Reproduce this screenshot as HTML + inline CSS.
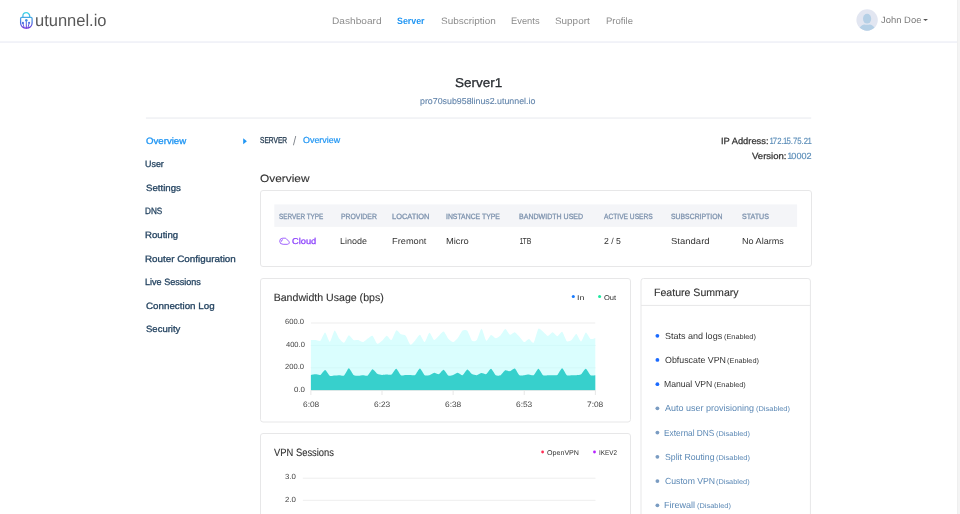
<!DOCTYPE html>
<html lang="en">
<head>
<meta charset="utf-8">
<title>UTunnel - Server Overview</title>
<style>
html,body{margin:0;padding:0;background:#fff;}
body{width:960px;height:514px;overflow:hidden;position:relative;font-family:"Liberation Sans",Arial,sans-serif;}
#page{position:absolute;left:0;top:0;width:960px;height:514px;overflow:hidden;will-change:transform;}
#shapes{position:absolute;left:0;top:0;}
.t{position:absolute;white-space:nowrap;transform-origin:0 0;display:block;text-rendering:geometricPrecision;}
.o{margin-left:-0.07em;letter-spacing:-0.12em;}
</style>
</head>
<body>
<div id="page">
<svg id="shapes" width="960" height="514" viewBox="0 0 960 514">
  <defs>
    <linearGradient id="lg" gradientUnits="userSpaceOnUse" x1="0" y1="12" x2="0" y2="29">
      <stop offset="0" stop-color="#3edbe8"/>
      <stop offset="0.35" stop-color="#48a6e4"/>
      <stop offset="0.65" stop-color="#4a6fe0"/>
      <stop offset="1" stop-color="#6d25d8"/>
    </linearGradient>
    <clipPath id="av"><circle cx="867.1" cy="20" r="10.7"/></clipPath>
  </defs>
  <!-- header -->
  <rect x="0" y="41.2" width="957" height="1.8" fill="#f1f2f8"/>
  <!-- scrollbar track -->
  <rect x="957.2" y="0" width="2.8" height="514" fill="#f4f4f4"/>
  <rect x="957" y="0" width="0.7" height="514" fill="#ececec"/>
  <!-- logo padlock -->
  <g fill="none" stroke="url(#lg)" stroke-width="1.25" stroke-linecap="round" stroke-linejoin="round">
    <path d="M22.9 17.2v-1.1a3.4 3.4 0 0 1 6.8 0v1.1"/>
    <path d="M21.7 17.4h9.3a1.1 1.1 0 0 1 1.1 1.1v4.6c0 3-2.4 5.1-5.75 5.1s-5.75-2.1-5.75-5.1v-4.6a1.1 1.1 0 0 1 1.1-1.1z"/>
    <path d="M26.3 20.6v7.4M23 23.2c0 1.6 .9 2.2 .9 4.2M29.1 23c0 1.7-.9 2.3-.9 4.4" stroke-width="1"/>
  </g>
  <g fill="url(#lg)">
    <circle cx="26.3" cy="20.3" r="1.25"/>
    <circle cx="22.9" cy="22.9" r="1.05"/>
    <circle cx="29.1" cy="22.7" r="1.05"/>
  </g>
  <!-- avatar -->
  <circle cx="867.1" cy="20" r="10.7" fill="#e2e6f1"/>
  <g clip-path="url(#av)" fill="#b5d0e6">
    <ellipse cx="867.1" cy="18.7" rx="4.1" ry="4.9"/>
    <path d="M858.7 31.5c0-4.2 2.4-6.3 5.6-7.1c1.8 .6 3.8 .6 5.6 0c3.2 .8 5.6 2.9 5.6 7.1z"/>
  </g>
  <!-- caret -->
  <path d="M923.1 19.1h4.9l-2.45 2z" fill="#555"/>
  <!-- hr -->
  <rect x="145.9" y="117.3" width="665.3" height="1.5" fill="#eff1f4"/>
  <!-- sidebar arrow -->
  <path d="M243.2 138.3v6l3.7-3z" fill="#2196f3"/>
  <!-- overview card -->
  <rect x="260.5" y="190.5" width="551" height="76" rx="2.5" fill="#fff" stroke="#e7e7e8"/>
  <rect x="274.3" y="204.4" width="522.8" height="22.5" fill="#f4f5f8"/>
  <!-- cloud icon -->
  <path d="M282.75 244.3a3.05 3.05 0 0 1 0-6.1h2.2q.8 0 1.3 .5l2.6 2.7a1.75 1.75 0 0 1-1.25 2.9z M281.2 241.4a1.8 1.8 0 0 1 1.4-1.7" fill="none" stroke="#8a3ffc" stroke-width="0.9" stroke-linecap="round" stroke-linejoin="round" opacity="0.9"/>
  <!-- bandwidth card -->
  <rect x="260.5" y="278.5" width="370" height="143.5" rx="2.5" fill="#fff" stroke="#e7e7e8"/>
  <g fill="#eeeeee">
    <rect x="310.9" y="322.5" width="284.4" height="1"/>
    <rect x="310.9" y="344.9" width="284.4" height="1"/>
    <rect x="310.9" y="367.3" width="284.4" height="1"/>
  </g>
<path d="M310.90,340.00C311.37,340.00 314.69,339.92 315.64,340.00C316.59,340.08 319.43,341.55 320.38,340.80C321.33,340.05 324.17,332.40 325.12,332.50C326.07,332.60 328.91,342.01 329.86,341.80C330.81,341.59 333.65,330.70 334.60,330.40C335.55,330.09 338.39,337.52 339.34,338.75C340.29,339.98 343.13,343.05 344.08,342.70C345.03,342.35 347.87,335.52 348.82,335.25C349.77,334.98 352.61,339.52 353.56,340.00C354.51,340.48 357.35,339.79 358.30,340.00C359.25,340.21 362.09,342.25 363.04,342.10C363.99,341.95 366.83,339.14 367.78,338.50C368.73,337.86 371.57,335.18 372.52,335.70C373.47,336.22 376.31,343.24 377.26,343.75C378.21,344.26 381.05,341.61 382.00,340.80C382.95,340.00 385.79,335.78 386.74,335.70C387.69,335.62 390.53,340.53 391.48,340.00C392.43,339.47 395.27,330.97 396.22,330.40C397.17,329.83 400.01,333.77 400.96,334.30C401.91,334.83 404.75,334.65 405.70,335.70C406.65,336.75 409.49,344.28 410.44,344.75C411.39,345.22 414.23,341.39 415.18,340.40C416.13,339.40 418.97,334.63 419.92,334.80C420.87,334.97 423.71,342.31 424.66,342.10C425.61,341.89 428.45,332.91 429.40,332.70C430.35,332.49 433.19,339.69 434.14,340.00C435.09,340.31 437.93,336.65 438.88,335.80C439.83,334.95 442.67,331.20 443.62,331.50C444.57,331.80 447.41,337.69 448.36,338.75C449.31,339.81 452.15,342.19 453.10,342.10C454.05,342.02 456.89,339.07 457.84,337.90C458.79,336.73 461.63,331.12 462.58,330.40C463.53,329.68 466.37,329.66 467.32,330.70C468.27,331.74 471.11,339.87 472.06,340.80C473.01,341.73 475.85,341.20 476.80,340.00C477.75,338.80 480.59,328.67 481.54,328.75C482.49,328.83 485.33,340.18 486.28,340.80C487.23,341.43 490.07,335.26 491.02,335.00C491.97,334.74 494.81,338.16 495.76,338.20C496.71,338.24 499.55,336.32 500.50,335.40C501.45,334.48 504.29,329.06 505.24,329.00C506.19,328.94 509.03,334.47 509.98,334.80C510.93,335.13 513.77,332.11 514.72,332.30C515.67,332.49 518.51,335.72 519.46,336.70C520.41,337.68 523.25,341.87 524.20,342.10C525.15,342.33 527.99,338.94 528.94,339.00C529.89,339.06 532.73,343.72 533.68,342.70C534.63,341.68 537.47,329.84 538.42,328.75C539.37,327.66 542.21,331.07 543.16,331.80C544.11,332.53 546.95,335.95 547.90,336.00C548.85,336.05 551.69,332.28 552.64,332.30C553.59,332.32 556.43,336.31 557.38,336.25C558.33,336.19 561.17,331.20 562.12,331.70C563.07,332.20 565.91,340.42 566.86,341.25C567.81,342.08 570.65,340.73 571.60,340.00C572.55,339.27 575.39,333.85 576.34,334.00C577.29,334.15 580.13,341.65 581.08,341.50C582.03,341.35 584.87,332.75 585.82,332.50C586.77,332.25 589.61,338.46 590.56,339.00C591.51,339.54 594.83,338.01 595.30,337.90L595.30,390.2L310.90,390.2Z" fill="#dafefe"/>
<rect x="310.9" y="344.9" width="284.4" height="1" fill="#d0f6f6" opacity="0.7"/>
<rect x="310.9" y="367.3" width="284.4" height="1" fill="#d0f6f6" opacity="0.7"/>
<path d="M310.90,374.90C311.37,374.84 314.69,374.30 315.64,374.30C316.59,374.30 319.43,375.34 320.38,374.90C321.33,374.46 324.17,369.81 325.12,369.90C326.07,369.98 328.91,375.19 329.86,375.75C330.81,376.31 333.65,375.56 334.60,375.50C335.55,375.44 338.39,375.20 339.34,375.20C340.29,375.20 343.13,376.19 344.08,375.50C345.03,374.81 347.87,368.31 348.82,368.25C349.77,368.19 352.61,374.15 353.56,374.90C354.51,375.65 357.35,375.72 358.30,375.75C359.25,375.78 362.09,375.22 363.04,375.20C363.99,375.18 366.83,376.09 367.78,375.50C368.73,374.91 371.57,369.47 372.52,369.30C373.47,369.13 376.31,373.24 377.26,373.80C378.21,374.36 381.05,374.83 382.00,374.90C382.95,374.97 385.79,374.54 386.74,374.50C387.69,374.46 390.53,375.08 391.48,374.50C392.43,373.92 395.27,368.63 396.22,368.70C397.17,368.77 400.01,374.58 400.96,375.20C401.91,375.82 404.75,374.93 405.70,374.90C406.65,374.87 409.49,374.90 410.44,374.90C411.39,374.90 414.23,375.54 415.18,374.90C416.13,374.26 418.97,368.47 419.92,368.50C420.87,368.53 423.71,374.53 424.66,375.20C425.61,375.87 428.45,375.44 429.40,375.20C430.35,374.96 433.19,372.91 434.14,372.80C435.09,372.69 437.93,374.41 438.88,374.10C439.83,373.79 442.67,369.56 443.62,369.70C444.57,369.84 447.41,374.98 448.36,375.50C449.31,376.02 452.15,375.18 453.10,374.90C454.05,374.62 456.89,372.67 457.84,372.70C458.79,372.73 461.63,375.52 462.58,375.20C463.53,374.88 466.37,369.61 467.32,369.50C468.27,369.39 471.11,373.53 472.06,374.10C473.01,374.67 475.85,375.31 476.80,375.20C477.75,375.09 480.59,373.11 481.54,373.00C482.49,372.89 485.33,374.52 486.28,374.10C487.23,373.68 490.07,368.69 491.02,368.80C491.97,368.91 494.81,374.56 495.76,375.20C496.71,375.84 499.55,375.70 500.50,375.20C501.45,374.70 504.29,370.59 505.24,370.20C506.19,369.81 509.03,371.47 509.98,371.30C510.93,371.13 513.77,368.11 514.72,368.50C515.67,368.89 518.51,374.53 519.46,375.20C520.41,375.87 523.25,375.27 524.20,375.20C525.15,375.13 527.99,374.50 528.94,374.50C529.89,374.50 532.73,375.78 533.68,375.20C534.63,374.62 537.47,368.69 538.42,368.70C539.37,368.71 542.21,374.65 543.16,375.30C544.11,375.95 546.95,375.21 547.90,375.20C548.85,375.19 551.69,375.23 552.64,375.20C553.59,375.17 556.43,375.59 557.38,374.90C558.33,374.20 561.17,368.21 562.12,368.25C563.07,368.29 565.91,374.61 566.86,375.30C567.81,376.00 570.65,375.21 571.60,375.20C572.55,375.19 575.39,375.29 576.34,375.20C577.29,375.11 580.13,374.95 581.08,374.30C582.03,373.65 584.87,368.61 585.82,368.70C586.77,368.79 589.61,374.55 590.56,375.20C591.51,375.85 594.83,375.20 595.30,375.20L595.30,390.2L310.90,390.2Z" fill="#37d0cc"/>
  <g fill="#e2e2e2">
    <rect x="310.9" y="390.2" width="284.4" height="0.7"/>
    <rect x="310.5" y="390.2" width="0.8" height="4.8"/>
    <rect x="381.6" y="390.2" width="0.8" height="4.8"/>
    <rect x="452.7" y="390.2" width="0.8" height="4.8"/>
    <rect x="523.8" y="390.2" width="0.8" height="4.8"/>
    <rect x="594.9" y="390.2" width="0.8" height="4.8"/>
  </g>
  <circle cx="573.3" cy="296.5" r="1.55" fill="#1a7cff"/>
  <circle cx="599.6" cy="296.5" r="1.55" fill="#1de9a0"/>
  <!-- vpn card -->
  <rect x="260.5" y="433.5" width="370" height="120" rx="2.5" fill="#fff" stroke="#e7e7e8"/>
  <g fill="#eeeeee">
    <rect x="302.8" y="477.7" width="292.7" height="1"/>
    <rect x="302.8" y="499.8" width="292.7" height="1"/>
  </g>
  <circle cx="542.6" cy="452" r="1.4" fill="#ff2d55"/>
  <circle cx="594.5" cy="452" r="1.4" fill="#b620ff"/>
  <!-- feature card -->
  <rect x="641" y="278.5" width="169.4" height="300" rx="2.5" fill="#fff" stroke="#e7e7e8"/>
  <rect x="641" y="304.9" width="169.4" height="1" fill="#e7e7e8"/>
  <g fill="#1a6aff">
    <circle cx="657.4" cy="335.8" r="1.9"/>
    <circle cx="657.4" cy="359.9" r="1.9"/>
    <circle cx="657.4" cy="384.2" r="1.9"/>
  </g>
  <g fill="#7a9cc2">
    <circle cx="657.4" cy="408.3" r="1.9"/>
    <circle cx="657.4" cy="432.6" r="1.9"/>
    <circle cx="657.4" cy="456.8" r="1.9"/>
    <circle cx="657.4" cy="481.1" r="1.9"/>
    <circle cx="657.4" cy="505.3" r="1.9"/>
  </g>
</svg>
<span class="t" style="left:35.07px;top:13.00px;font-size:16.8px;line-height:16.8px;color:#585858;transform:scaleX(0.9830);">utunnel.io</span>
<span class="t" style="left:331.89px;top:17.00px;font-size:9.3px;line-height:9.3px;color:#8c8c8c;transform:scaleX(1.0894);">Dashboard</span>
<span class="t" style="left:440.75px;top:17.00px;font-size:9.3px;line-height:9.3px;color:#8c8c8c;transform:scaleX(1.0723);">Subscription</span>
<span class="t" style="left:510.95px;top:17.00px;font-size:9.3px;line-height:9.3px;color:#8c8c8c;transform:scaleX(1.0049);">Events</span>
<span class="t" style="left:555.35px;top:17.00px;font-size:9.3px;line-height:9.3px;color:#8c8c8c;transform:scaleX(1.0651);">Support</span>
<span class="t" style="left:605.94px;top:17.00px;font-size:9.3px;line-height:9.3px;color:#8c8c8c;transform:scaleX(1.0237);">Profile</span>
<span class="t" style="left:397.26px;top:17.00px;font-size:9.3px;line-height:9.3px;color:#2196f3;transform:scaleX(0.9519);font-weight:700;">Server</span>
<span class="t" style="left:880.66px;top:16.00px;font-size:9.2px;line-height:9.2px;color:#7a7a7a;transform:scaleX(1.0271);">John Doe</span>
<span class="t" style="left:454.89px;top:77.00px;font-size:12.8px;line-height:12.8px;color:#2a2e33;transform:scaleX(1.0570);-webkit-text-stroke:0.3px #2a2e33;">Server1</span>
<span class="t" style="left:420.45px;top:97.00px;font-size:8.7px;line-height:8.7px;color:#6083aa;transform:scaleX(1.0162);-webkit-text-stroke:0.1px #6083aa;">pro70sub958linus2.utunnel.io</span>
<span class="t" style="left:145.67px;top:137.00px;font-size:9.2px;line-height:9.2px;color:#2196f3;transform:scaleX(1.0487);-webkit-text-stroke:0.3px #2196f3;">Overview</span>
<span class="t" style="left:145.43px;top:160.00px;font-size:9.2px;line-height:9.2px;color:#264562;transform:scaleX(0.9686);-webkit-text-stroke:0.3px #264562;">User</span>
<span class="t" style="left:145.66px;top:184.00px;font-size:9.2px;line-height:9.2px;color:#264562;transform:scaleX(1.0523);-webkit-text-stroke:0.3px #264562;">Settings</span>
<span class="t" style="left:145.44px;top:207.00px;font-size:9.2px;line-height:9.2px;color:#264562;transform:scaleX(0.8914);-webkit-text-stroke:0.3px #264562;">DNS</span>
<span class="t" style="left:145.33px;top:231.00px;font-size:9.2px;line-height:9.2px;color:#264562;transform:scaleX(1.0466);-webkit-text-stroke:0.3px #264562;">Routing</span>
<span class="t" style="left:145.31px;top:255.00px;font-size:9.2px;line-height:9.2px;color:#264562;transform:scaleX(1.0708);-webkit-text-stroke:0.3px #264562;">Router Configuration</span>
<span class="t" style="left:145.37px;top:278.00px;font-size:9.2px;line-height:9.2px;color:#264562;transform:scaleX(0.9855);-webkit-text-stroke:0.3px #264562;">Live Sessions</span>
<span class="t" style="left:145.61px;top:302.00px;font-size:9.2px;line-height:9.2px;color:#264562;transform:scaleX(1.0661);-webkit-text-stroke:0.3px #264562;">Connection Log</span>
<span class="t" style="left:145.67px;top:325.00px;font-size:9.2px;line-height:9.2px;color:#264562;transform:scaleX(1.0359);-webkit-text-stroke:0.3px #264562;">Security</span>
<span class="t" style="left:260.00px;top:136.00px;font-size:8.6px;line-height:8.6px;color:#2a4056;transform:scaleX(0.7694);-webkit-text-stroke:0.3px #2a4056;">SERVER</span>
<span class="t" style="left:292.70px;top:135.00px;font-size:12.3px;line-height:12.3px;color:#7b8087;transform:scaleX(0.9292);">/</span>
<span class="t" style="left:303.00px;top:136.00px;font-size:8.8px;line-height:8.8px;color:#2196f3;transform:scaleX(1.0138);-webkit-text-stroke:0.2px #2196f3;">Overview</span>
<span class="t" style="left:259.66px;top:174.00px;font-size:10.6px;line-height:10.6px;color:#333333;transform:scaleX(1.1229);-webkit-text-stroke:0.12px #333333;">Overview</span>
<span class="t" style="left:720.66px;top:137.00px;font-size:9.0px;line-height:9.0px;color:#333333;transform:scaleX(1.0354);-webkit-text-stroke:0.25px #333333;">IP Address:</span>
<span class="t" style="left:769.56px;top:137.00px;font-size:9.0px;line-height:9.0px;color:#5b8db8;transform:scaleX(0.8622);-webkit-text-stroke:0.15px #5b8db8;"><span class="o">1</span>72.<span class="o">1</span>5.75.2<span class="o">1</span></span>
<span class="t" style="left:751.78px;top:152.00px;font-size:9.0px;line-height:9.0px;color:#333333;transform:scaleX(1.0606);-webkit-text-stroke:0.25px #333333;">Version:</span>
<span class="t" style="left:787.85px;top:152.00px;font-size:9.0px;line-height:9.0px;color:#5b8db8;transform:scaleX(1.0116);-webkit-text-stroke:0.15px #5b8db8;"><span class="o">1</span>0002</span>
<span class="t" style="left:279.21px;top:213.00px;font-size:7.6px;line-height:7.6px;color:#7e93ae;transform:scaleX(0.8377);-webkit-text-stroke:0.3px #7e93ae;">SERVER TYPE</span>
<span class="t" style="left:340.55px;top:213.00px;font-size:7.6px;line-height:7.6px;color:#7e93ae;transform:scaleX(0.9034);-webkit-text-stroke:0.3px #7e93ae;">PROVIDER</span>
<span class="t" style="left:392.40px;top:213.00px;font-size:7.6px;line-height:7.6px;color:#7e93ae;transform:scaleX(0.9793);-webkit-text-stroke:0.3px #7e93ae;">LOCATION</span>
<span class="t" style="left:446.38px;top:213.00px;font-size:7.6px;line-height:7.6px;color:#7e93ae;transform:scaleX(0.9030);-webkit-text-stroke:0.3px #7e93ae;">INSTANCE TYPE</span>
<span class="t" style="left:519.14px;top:213.00px;font-size:7.6px;line-height:7.6px;color:#7e93ae;transform:scaleX(0.9270);-webkit-text-stroke:0.3px #7e93ae;">BANDWIDTH USED</span>
<span class="t" style="left:604.20px;top:213.00px;font-size:7.6px;line-height:7.6px;color:#7e93ae;transform:scaleX(0.8754);-webkit-text-stroke:0.3px #7e93ae;">ACTIVE USERS</span>
<span class="t" style="left:671.09px;top:213.00px;font-size:7.6px;line-height:7.6px;color:#7e93ae;transform:scaleX(0.9042);-webkit-text-stroke:0.3px #7e93ae;">SUBSCRIPTION</span>
<span class="t" style="left:742.28px;top:213.00px;font-size:7.6px;line-height:7.6px;color:#7e93ae;transform:scaleX(0.9334);-webkit-text-stroke:0.3px #7e93ae;">STATUS</span>
<span class="t" style="left:291.54px;top:237.00px;font-size:8.6px;line-height:8.6px;color:#8a3ffc;transform:scaleX(1.0791);-webkit-text-stroke:0.25px #8a3ffc;">Cloud</span>
<span class="t" style="left:340.38px;top:237.00px;font-size:8.7px;line-height:8.7px;color:#333333;transform:scaleX(1.0337);">Linode</span>
<span class="t" style="left:392.26px;top:237.00px;font-size:8.7px;line-height:8.7px;color:#333333;transform:scaleX(1.0649);">Fremont</span>
<span class="t" style="left:446.25px;top:237.00px;font-size:8.7px;line-height:8.7px;color:#333333;transform:scaleX(1.0740);">Micro</span>
<span class="t" style="left:519.67px;top:237.00px;font-size:8.7px;line-height:8.7px;color:#333333;transform:scaleX(0.8039);"><span class="o">1</span>TB</span>
<span class="t" style="left:603.77px;top:237.00px;font-size:8.7px;line-height:8.7px;color:#333333;transform:scaleX(0.9976);">2 / 5</span>
<span class="t" style="left:670.97px;top:237.00px;font-size:8.7px;line-height:8.7px;color:#333333;transform:scaleX(1.0941);">Standard</span>
<span class="t" style="left:741.87px;top:237.00px;font-size:8.7px;line-height:8.7px;color:#333333;transform:scaleX(1.0427);">No Alarms</span>
<span class="t" style="left:273.65px;top:293.00px;font-size:10.6px;line-height:10.6px;color:#333333;transform:scaleX(1.0000);-webkit-text-stroke:0.12px #333333;">Bandwidth Usage (bps)</span>
<span class="t" style="left:577.21px;top:295.00px;font-size:7.0px;line-height:7.0px;color:#333333;transform:scaleX(1.2605);">In</span>
<span class="t" style="left:604.46px;top:295.00px;font-size:7.0px;line-height:7.0px;color:#333333;transform:scaleX(1.0789);">Out</span>
<span class="t" style="left:285.42px;top:318.00px;font-size:7.4px;line-height:7.4px;color:#444444;transform:scaleX(1.0296);">600.0</span>
<span class="t" style="left:285.63px;top:341.00px;font-size:7.4px;line-height:7.4px;color:#444444;transform:scaleX(1.0180);">400.0</span>
<span class="t" style="left:285.42px;top:363.00px;font-size:7.4px;line-height:7.4px;color:#444444;transform:scaleX(1.0296);">200.0</span>
<span class="t" style="left:293.60px;top:386.00px;font-size:7.4px;line-height:7.4px;color:#444444;transform:scaleX(1.0687);">0.0</span>
<span class="t" style="left:302.68px;top:401.00px;font-size:7.9px;line-height:7.9px;color:#444444;transform:scaleX(1.0577);">6:08</span>
<span class="t" style="left:373.78px;top:401.00px;font-size:7.9px;line-height:7.9px;color:#444444;transform:scaleX(1.0591);">6:23</span>
<span class="t" style="left:444.88px;top:401.00px;font-size:7.9px;line-height:7.9px;color:#444444;transform:scaleX(1.0577);">6:38</span>
<span class="t" style="left:515.98px;top:401.00px;font-size:7.9px;line-height:7.9px;color:#444444;transform:scaleX(1.0591);">6:53</span>
<span class="t" style="left:587.08px;top:401.00px;font-size:7.9px;line-height:7.9px;color:#444444;transform:scaleX(1.0577);">7:08</span>
<span class="t" style="left:274.38px;top:448.00px;font-size:10.6px;line-height:10.6px;color:#333333;transform:scaleX(0.8862);-webkit-text-stroke:0.12px #333333;">VPN Sessions</span>
<span class="t" style="left:547.48px;top:450.00px;font-size:7.0px;line-height:7.0px;color:#333333;transform:scaleX(1.0149);">OpenVPN</span>
<span class="t" style="left:598.53px;top:450.00px;font-size:7.0px;line-height:7.0px;color:#333333;transform:scaleX(0.9056);">IKEV2</span>
<span class="t" style="left:285.21px;top:473.00px;font-size:7.4px;line-height:7.4px;color:#444444;transform:scaleX(1.0585);">3.0</span>
<span class="t" style="left:285.10px;top:496.00px;font-size:7.4px;line-height:7.4px;color:#444444;transform:scaleX(1.0686);">2.0</span>
<span class="t" style="left:654.15px;top:288.00px;font-size:10.6px;line-height:10.6px;color:#333333;transform:scaleX(0.9979);-webkit-text-stroke:0.12px #333333;">Feature Summary</span>
<span class="t" style="left:664.69px;top:332.00px;font-size:8.9px;line-height:8.9px;color:#333333;transform:scaleX(1.0163);">Stats and logs</span>
<span class="t" style="left:723.66px;top:334.00px;font-size:7.0px;line-height:7.0px;color:#333333;transform:scaleX(1.0507);">(Enabled)</span>
<span class="t" style="left:664.70px;top:356.00px;font-size:8.9px;line-height:8.9px;color:#333333;transform:scaleX(0.9962);">Obfuscate VPN</span>
<span class="t" style="left:726.56px;top:358.00px;font-size:7.0px;line-height:7.0px;color:#333333;transform:scaleX(1.0541);">(Enabled)</span>
<span class="t" style="left:664.41px;top:380.00px;font-size:8.9px;line-height:8.9px;color:#333333;transform:scaleX(0.9701);">Manual VPN</span>
<span class="t" style="left:714.16px;top:382.00px;font-size:7.0px;line-height:7.0px;color:#333333;transform:scaleX(1.0473);">(Enabled)</span>
<span class="t" style="left:665.10px;top:404.00px;font-size:8.9px;line-height:8.9px;color:#5b88b5;transform:scaleX(1.0139);">Auto user provisioning</span>
<span class="t" style="left:755.95px;top:406.00px;font-size:7.0px;line-height:7.0px;color:#5b88b5;transform:scaleX(1.0656);">(Disabled)</span>
<span class="t" style="left:664.43px;top:429.00px;font-size:8.9px;line-height:8.9px;color:#5b88b5;transform:scaleX(0.9375);">External DNS</span>
<span class="t" style="left:716.35px;top:431.00px;font-size:7.0px;line-height:7.0px;color:#5b88b5;transform:scaleX(1.0656);">(Disabled)</span>
<span class="t" style="left:664.71px;top:453.00px;font-size:8.9px;line-height:8.9px;color:#5b88b5;transform:scaleX(0.9837);">Split Routing</span>
<span class="t" style="left:715.75px;top:455.00px;font-size:7.0px;line-height:7.0px;color:#5b88b5;transform:scaleX(1.0656);">(Disabled)</span>
<span class="t" style="left:664.67px;top:477.00px;font-size:8.9px;line-height:8.9px;color:#5b88b5;transform:scaleX(0.9764);">Custom VPN</span>
<span class="t" style="left:716.36px;top:479.00px;font-size:7.0px;line-height:7.0px;color:#5b88b5;transform:scaleX(1.0527);">(Disabled)</span>
<span class="t" style="left:664.38px;top:501.00px;font-size:8.9px;line-height:8.9px;color:#5b88b5;transform:scaleX(1.0180);">Firewall</span>
<span class="t" style="left:696.95px;top:503.00px;font-size:7.0px;line-height:7.0px;color:#5b88b5;transform:scaleX(1.0624);">(Disabled)</span>
</div>
</body>
</html>
